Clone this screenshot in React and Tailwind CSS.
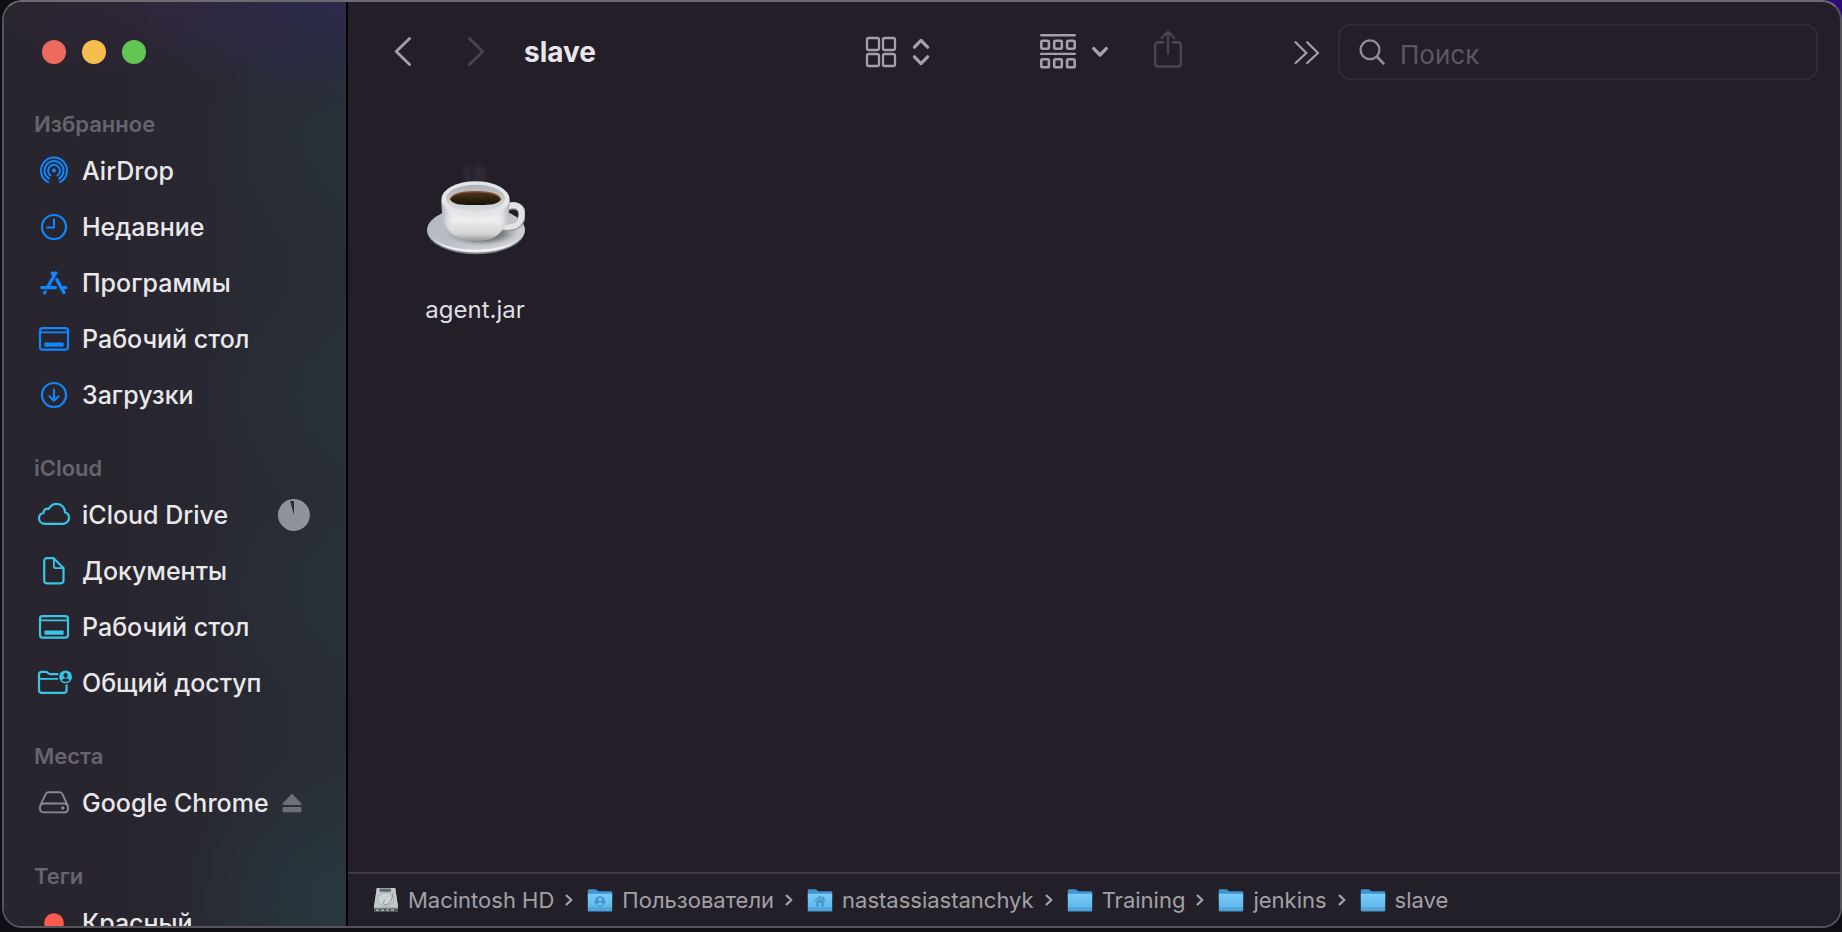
import React from "react";

const line = { fill: "none", stroke: "currentColor", strokeLinecap: "round", strokeLinejoin: "round" };

/* Sidebar icons share a 36x30 canvas centred on (18, 15). */
function SideIcon({ children, width = 2.2 }) {
  return (
    <svg viewBox="0 0 36 30" className="h-[30px] w-9 shrink-0" {...line} strokeWidth={width} aria-hidden="true">
      {children}
    </svg>
  );
}

const AirDropIcon = () => (
  <SideIcon width={2}>
    <path d="M12.1 26.1A13 13 0 1 1 23.9 26.1" />
    <path d="M12.9 22.6A9.5 9.5 0 1 1 23.1 22.6" />
    <path d="M14.4 19.4A5.9 5.9 0 1 1 21.6 19.4" />
    <circle cx="18" cy="14.6" r="2" fill="currentColor" stroke="none" />
  </SideIcon>
);

const ClockIcon = () => (
  <SideIcon>
    <circle cx="18" cy="15" r="12" />
    <path d="M18 7.2V15.6H11" strokeWidth="2" />
  </SideIcon>
);

const AppsIcon = () => (
  <SideIcon width={3.3}>
    <path d="M19.8 4.9L11.8 18.8" />
    <path d="M5.8 19.6H19.4" />
    <path d="M16.2 4.9L17.6 7.2" />
    <path d="M20.8 11.6L28 24.6" />
    <path d="M26.4 19.6H29.8" />
    <path d="M9.2 24L8.7 24.8" />
  </SideIcon>
);

const DesktopIcon = () => (
  <SideIcon>
    <rect x="4" y="4.2" width="28" height="21.4" rx="2.6" />
    <path d="M4 8.4H32" strokeWidth="1.6" />
    <rect x="8.4" y="18.6" width="19.2" height="4.2" rx="0.8" fill="currentColor" stroke="none" />
  </SideIcon>
);

const DownloadIcon = () => (
  <SideIcon>
    <circle cx="18" cy="15" r="12" />
    <path d="M18 9.4V20.4M13.4 16.2L18 20.8L22.6 16.2" strokeWidth="2" />
  </SideIcon>
);

const CloudIcon = () => (
  <SideIcon>
    <path d="M9.2 23.8C5.6 23.8 3 21.4 3 18.3C3 15.6 4.8 13.5 7.5 13C7.3 10 10.2 7.9 12.9 8.9C14.3 5.8 17.2 3.8 20.6 3.8C25.4 3.8 28.8 7.3 29 12.2C31.4 12.9 33 15.2 33 17.8C33 21.2 30.3 23.8 27 23.8Z" />
  </SideIcon>
);

const DocumentIcon = () => (
  <SideIcon>
    <path d="M17.6 2.2H10.9C9.3 2.2 8.2 3.3 8.2 4.9V24.6C8.2 26.2 9.3 27.3 10.9 27.3H24.8C26.4 27.3 27.5 26.2 27.5 24.6V12Z" />
    <path d="M17.9 2.4V10.2C17.9 11.4 18.6 12.1 19.8 12.1H27.3" strokeWidth="1.8" />
  </SideIcon>
);

const SharedIcon = () => (
  <SideIcon>
    <path d="M21.5 6.2H14.6C13.8 6.2 13.2 6 12.6 5.5L11.2 4.3C10.7 3.9 10.2 3.8 9.6 3.8H5.6C4 3.8 3 4.8 3 6.4V22C3 23.9 4 24.9 5.9 24.9H28C29.6 24.9 30.6 23.9 30.6 22.3V17.4" />
    <path d="M3 10.8H21.5" strokeWidth="1.8" />
    <circle cx="29.6" cy="8.9" r="6.4" fill="currentColor" stroke="none" />
    <ellipse cx="29.6" cy="7.2" rx="2.1" ry="2.5" fill="#282631" stroke="none" />
    <path d="M25.6 12.6C26.5 10.8 28 10.5 29.6 10.5C31.2 10.5 32.7 10.8 33.6 12.6C31.4 14.4 27.8 14.4 25.6 12.6Z" fill="#282631" stroke="none" />
  </SideIcon>
);

const DriveIcon = () => (
  <SideIcon width={1.9}>
    <path d="M9.6 6.2C10.1 4.8 11 4.3 12.4 4.3H23.6C25 4.3 25.9 4.8 26.4 6.2L31.4 16.8C31.8 17.7 32 18.6 32 19.6V20.4C32 23 30.6 24.4 28 24.4H8C5.4 24.4 4 23 4 20.4V19.6C4 18.6 4.2 17.7 4.6 16.8Z" />
    <path d="M4.6 17.2C5.4 16 6.4 15.5 8 15.5H28C29.6 15.5 30.6 16 31.4 17.2" />
    <circle cx="26.8" cy="20" r="1.7" fill="currentColor" stroke="none" />
  </SideIcon>
);

const TagDot = () => (
  <SideIcon>
    <circle cx="18" cy="15" r="9.8" fill="currentColor" stroke="none" />
  </SideIcon>
);

const SyncPie = () => (
  <svg viewBox="0 0 32 32" className="ml-auto size-8 shrink-0 text-[#90939b]" role="img" aria-label="Синхронизация">
    <path d="M16 16L16 2L16 0A16 16 0 1 1 11.6 0.6Z" fill="currentColor" />
    <path d="M11.4 .7A16 16 0 0 1 16.2 0V2H11.8Z" fill="currentColor" />
  </svg>
);

const Eject = () => (
  <svg viewBox="0 0 20 20" className="mr-2 ml-auto size-5 shrink-0 text-[#6d7079]" fill="currentColor" aria-hidden="true">
    <path d="M9.1 1.4Q10 .6 10.9 1.4L19.2 10.2Q20 11.8 18.6 12H1.4Q0 11.8 .8 10.2Z" />
    <rect x="0.5" y="14" width="19" height="5.2" rx="1" />
  </svg>
);

const sections = [
  {
    title: "Избранное",
    color: "text-[#0f87ff]",
    items: [
      { label: "AirDrop", Icon: AirDropIcon },
      { label: "Недавние", Icon: ClockIcon },
      { label: "Программы", Icon: AppsIcon },
      { label: "Рабочий стол", Icon: DesktopIcon },
      { label: "Загрузки", Icon: DownloadIcon },
    ],
  },
  {
    title: "iCloud",
    color: "text-[#38c6e6]",
    items: [
      { label: "iCloud Drive", Icon: CloudIcon, Extra: SyncPie },
      { label: "Документы", Icon: DocumentIcon },
      { label: "Рабочий стол", Icon: DesktopIcon },
      { label: "Общий доступ", Icon: SharedIcon },
    ],
  },
  {
    title: "Места",
    color: "text-[#8b898f]",
    items: [{ label: "Google Chrome", Icon: DriveIcon, Extra: Eject }],
  },
  {
    title: "Теги",
    color: "text-[#ff5a52]",
    items: [{ label: "Красный", Icon: TagDot }],
  },
];

function Sidebar() {
  return (
    <aside className="flex w-[344px] shrink-0 flex-col overflow-hidden border-r-2 border-black bg-[#28252f] bg-[radial-gradient(220px_110px_at_100%_0,#2b2a4c,transparent),radial-gradient(200px_80px_at_50%_0,#31263a,transparent),radial-gradient(150px_110px_at_100%_140px,#28343a80,transparent),radial-gradient(150px_110px_at_100%_395px,#28353b80,transparent),radial-gradient(150px_110px_at_100%_590px,#28353b80,transparent),radial-gradient(170px_150px_at_100%_900px,#29383f,transparent),linear-gradient(to_right,#28252f_35%,#292e36)]">
      <div className="flex h-[103px] shrink-0 gap-4 pt-[38px] pl-[38px]">
        <button aria-label="Закрыть" className="size-6 rounded-full bg-[#ed6a5f]" />
        <button aria-label="Свернуть" className="size-6 rounded-full bg-[#f5be4f]" />
        <button aria-label="Развернуть" className="size-6 rounded-full bg-[#62c655]" />
      </div>
      <nav className="flex flex-col gap-[26px]">
        {sections.map((s) => (
          <section key={s.title}>
            <h2 className="h-[38px] pl-[30px] text-[22px] leading-[38px] font-semibold text-[#67646e]">{s.title}</h2>
            <ul>
              {s.items.map(({ label, Icon, Extra }) => (
                <li key={label}>
                  <a href="#" className={"flex h-14 items-center pr-9 pl-8 " + s.color}>
                    <Icon />
                    <span className="ml-[10px] text-[25px] leading-8 font-medium whitespace-nowrap text-[#e9e8ea]">{label}</span>
                    {Extra && <Extra />}
                  </a>
                </li>
              ))}
            </ul>
          </section>
        ))}
      </nav>
    </aside>
  );
}

function Toolbar() {
  return (
    <header className="flex h-[100px] shrink-0 items-center pr-[22px] pl-[46px] text-[#a59fab]">
      <button aria-label="Назад" className="shrink-0">
        <svg viewBox="0 0 18 30" className="h-[30px] w-[18px]" {...line} strokeWidth="2.8">
          <path d="M15.6 1.6L2.2 14.4L15.6 27.4" />
        </svg>
      </button>
      <button aria-label="Вперёд" className="ml-[55px] shrink-0 text-[#4a4450]" disabled>
        <svg viewBox="0 0 18 30" className="h-[30px] w-[18px]" {...line} strokeWidth="2.8">
          <path d="M2.4 1.6L15.8 14.4L2.4 27.4" />
        </svg>
      </button>
      <h1 className="ml-[39px] text-[28px] leading-9 font-bold text-[#e8e6e9]">slave</h1>
      <button aria-label="Вид: значки" className="ml-auto flex shrink-0 items-center gap-[15px]">
        <svg viewBox="0 0 32 32" className="size-8" {...line} strokeWidth="2.3">
          <rect x="2" y="2" width="12" height="12" rx="1.8" />
          <rect x="18" y="2" width="12" height="12" rx="1.8" />
          <rect x="2" y="18" width="12" height="12" rx="1.8" />
          <rect x="18" y="18" width="12" height="12" rx="1.8" />
        </svg>
        <svg viewBox="0 0 18 28" className="h-7 w-[18px]" {...line} strokeWidth="3.2">
          <path d="M2.4 9.2L9 2.4L15.6 9.2M2.4 18.8L9 25.6L15.6 18.8" />
        </svg>
      </button>
      <button aria-label="Группировка" className="ml-[110px] flex shrink-0 items-center gap-4">
        <svg viewBox="0 0 36 36" className="size-9" {...line} strokeWidth="2.6">
          <path d="M1.2 1.2H34.8M1.2 19.9H34.8" strokeWidth="2.4" />
          <rect x="1.3" y="6.7" width="7.6" height="8" rx="1.4" />
          <rect x="14.2" y="6.7" width="7.6" height="8" rx="1.4" />
          <rect x="27.1" y="6.7" width="7.6" height="8" rx="1.4" />
          <rect x="1.3" y="25.3" width="7.6" height="8" rx="1.4" />
          <rect x="14.2" y="25.3" width="7.6" height="8" rx="1.4" />
          <rect x="27.1" y="25.3" width="7.6" height="8" rx="1.4" />
        </svg>
        <svg viewBox="0 0 16 12" className="h-3 w-4" {...line} strokeWidth="3.4">
          <path d="M1.8 2.6L8 9L14.2 2.6" />
        </svg>
      </button>
      <button aria-label="Поделиться" className="ml-[45px] shrink-0 text-[#4a4450]" disabled>
        <svg viewBox="0 2 30 40" className="h-10 w-[30px]" overflow="visible" {...line} strokeWidth="2.5">
          <path d="M10 12.2H5.4C3.3 12.2 2.2 13.3 2.2 15.4V33.4C2.2 35.5 3.3 36.6 5.4 36.6H24.6C26.7 36.6 27.8 35.5 27.8 33.4V15.4C27.8 13.3 26.7 12.2 24.6 12.2H20" />
          <path d="M15 23.6V2M8.6 8L15 1.8L21.4 8" strokeWidth="2.2" />
        </svg>
      </button>
      <button aria-label="Ещё" className="ml-[111px] shrink-0">
        <svg viewBox="0 0 26 24" className="h-6 w-[26px]" {...line} strokeWidth="2.2">
          <path d="M1.6 2.2L12.4 13L1.6 23M13.2 2.2L24 13L13.2 23" />
        </svg>
      </button>
      <label className="ml-[18px] flex h-14 w-[480px] shrink-0 items-center rounded-xl border-2 border-[#312b36] pl-[18px]">
        <svg viewBox="0 0 28 28" className="size-7 shrink-0 text-[#918d96]" {...line} strokeWidth="2.3" aria-hidden="true">
          <circle cx="12" cy="11.8" r="9.4" />
          <path d="M19 18.8L25.4 25.4" strokeWidth="2.8" />
        </svg>
        <input
          type="search"
          aria-label="Поиск"
          placeholder="Поиск"
          className="ml-[14px] min-w-0 flex-1 bg-transparent pt-[6px] text-[26px] leading-8 text-[#e8e6e9] outline-none placeholder:text-[#5c5762]"
        />
      </label>
    </header>
  );
}

function CoffeeCup() {
  return (
    <svg viewBox="0 0 100 104" className="h-[104px] w-[100px]" aria-hidden="true">
      <defs>
        <linearGradient id="saucer" x1="0" y1="0" x2="1" y2="1">
          <stop offset="0" stopColor="#aeb7c1" />
          <stop offset=".45" stopColor="#b9bec4" />
          <stop offset="1" stopColor="#d9dadc" />
        </linearGradient>
        <radialGradient id="shade">
          <stop offset="0" stopColor="#45484d" />
          <stop offset=".6" stopColor="#6d7176" stopOpacity=".8" />
          <stop offset="1" stopColor="#a5a9ae" stopOpacity="0" />
        </radialGradient>
        <linearGradient id="body" x1="0" y1="0" x2="0" y2="1">
          <stop offset="0" stopColor="#e2e3e6" />
          <stop offset=".5" stopColor="#ededee" />
          <stop offset=".82" stopColor="#d2d2d3" />
          <stop offset="1" stopColor="#8f9092" />
        </linearGradient>
        <linearGradient id="side" x1="0" y1="0" x2="1" y2="0">
          <stop offset="0" stopColor="#85888d" stopOpacity=".6" />
          <stop offset=".2" stopColor="#fff" stopOpacity="0" />
          <stop offset=".8" stopColor="#fff" stopOpacity="0" />
          <stop offset="1" stopColor="#85888d" stopOpacity=".6" />
        </linearGradient>
        <linearGradient id="inner" x1="0" y1="0" x2="0" y2="1">
          <stop offset="0" stopColor="#aeb1b6" />
          <stop offset="1" stopColor="#dcdddf" />
        </linearGradient>
        <linearGradient id="coffee" x1="0" y1="0" x2="0" y2="1">
          <stop offset="0" stopColor="#56371f" />
          <stop offset=".5" stopColor="#30220f" />
          <stop offset="1" stopColor="#17120a" />
        </linearGradient>
        <filter id="soft" x="-1" y="-1" width="3" height="3">
          <feGaussianBlur stdDeviation="2.4" />
        </filter>
      </defs>
      <g fill="none" stroke="#64626e" strokeWidth="3" opacity=".38" filter="url(#soft)">
        <path d="M44 31C38 24 46 17 41 10M52 31C48 24 55 16 52 8M57 31C62 24 54 17 60 12" />
      </g>
      <g transform="translate(1 0)">
        <ellipse cx="50" cy="74.6" rx="49" ry="23.6" fill="#7d838b" />
        <ellipse cx="50" cy="73.8" rx="48.8" ry="23" fill="url(#saucer)" />
        <path d="M3 78C9 89 27 96 50 96S91 89 97 78C92 87.5 74 93.6 50 93.6S8 87.5 3 78Z" fill="#f1f2f3" />
        <ellipse cx="56" cy="77" rx="37" ry="13.4" fill="url(#shade)" />
        <path d="M80 51.5C91 47 96.5 52 96 59C95.5 68 89 73.5 77 71" fill="none" stroke="#95989c" strokeWidth="7.4" strokeLinecap="round" />
        <path d="M80 51C91 46.5 96.2 51.5 95.7 58.5C95.2 67.5 89 73 77 70.5" fill="none" stroke="#e1e2e4" strokeWidth="5.8" strokeLinecap="round" />
        <path d="M15.5 44C15.5 64 19 72 27.5 79C37 87.6 62 87.6 71.5 79C80 72 83.5 64 83.5 44Z" fill="url(#body)" />
        <path d="M15.5 44C15.5 64 19 72 27.5 79C37 87.6 62 87.6 71.5 79C80 72 83.5 64 83.5 44Z" fill="url(#side)" />
        <ellipse cx="49.5" cy="43.2" rx="34" ry="18" fill="#e4e5e8" />
        <ellipse cx="49.5" cy="42.4" rx="29.5" ry="13.6" fill="url(#inner)" />
        <path d="M24 43.6C26 37.6 37 35.6 49.5 35.6S73 37.6 75 43.6C71 49.6 61 49.1 49.5 49.1S28 49.6 24 43.6Z" fill="url(#coffee)" />
        <path d="M24 43.6C26 37.6 37 35.6 49.5 35.6S73 37.6 75 43.6" fill="none" stroke="#8b5536" strokeWidth="1.2" />
      </g>
    </svg>
  );
}

function DiskIcon() {
  return (
    <svg viewBox="0 0 26 26" className="size-[26px] shrink-0" aria-hidden="true">
      <path d="M3.8 1H22.2L25 20V24Q25 25 24 25H2Q1 25 1 24V20Z" fill="#a9b1b3" />
      <path d="M3.8 1H22.2L25 20H1Z" fill="#c3c9cb" />
      <rect x="6.5" y="1.6" width="11.5" height="3.2" fill="#62686b" />
      <ellipse cx="12.6" cy="12.4" rx="8" ry="6.8" fill="#cdd2d4" stroke="#a2aaad" strokeWidth="1" />
      <path d="M20 6C19 12 18 17 13 17.6C9.6 17.8 8.8 14.4 12 13.4" fill="none" stroke="#899195" strokeWidth="1" />
      <path d="M1 21.4H25V24Q25 25 24 25H2Q1 25 1 24Z" fill="#4e5557" />
      <path d="M3 23.2H23" stroke="#a3aeac" strokeWidth="1.4" strokeDasharray="3 2" />
    </svg>
  );
}

function FolderIcon({ badge }) {
  return (
    <svg viewBox="0 0 26 26" className="size-[26px] shrink-0" aria-hidden="true">
      <defs>
        <linearGradient id="folder" x1="0" y1="0" x2="0" y2="1">
          <stop offset="0" stopColor="#7accf8" />
          <stop offset=".75" stopColor="#62b9ec" />
          <stop offset="1" stopColor="#4596cb" />
        </linearGradient>
      </defs>
      <path d="M.8 3.4Q.8 2.2 2 2.2H8.2Q9 2.2 9.6 2.7L11 3.9Q11.5 4.2 12.2 4.2H24Q25.2 4.2 25.2 5.4V12H.8Z" fill="#3f93cf" />
      <path d="M.8 6.8H25.2V23.2Q25.2 24.4 24 24.4H2Q.8 24.4 .8 23.2Z" fill="url(#folder)" />
      <path d="M1 20.8H25" stroke="#4b9dd3" strokeWidth=".8" />
      {badge === "user" && (
        <g>
          <circle cx="13" cy="14.2" r="5.2" fill="#4397cf" />
          <circle cx="13" cy="12.6" r="1.9" fill="#74c5f3" />
          <path d="M9.8 17Q13 13.8 16.2 17Q13 19.6 9.8 17Z" fill="#74c5f3" />
        </g>
      )}
      {badge === "home" && (
        <g>
          <path d="M7.6 14.2L13 9.4L18.4 14.2M16.6 9.6V12" fill="none" stroke="#4397cf" strokeWidth="1.3" />
          <path d="M9.2 14.8L13 11.4L16.8 14.8V19.4H14.4V15.8H11.6V19.4H9.2Z" fill="#4397cf" />
        </g>
      )}
    </svg>
  );
}

const path = [
  { name: "Macintosh HD", disk: true },
  { name: "Пользователи", badge: "user" },
  { name: "nastassiastanchyk", badge: "home" },
  { name: "Training" },
  { name: "jenkins" },
  { name: "slave" },
];

function PathBar() {
  return (
    <footer className="shrink-0 border-t-2 border-[#3d3943] bg-[#221f28]">
      <ol className="flex h-[52px] items-center pl-[25px] text-[22px] leading-7 text-[#a3a1a6]">
        {path.map((p, i) => (
          <li key={p.name} className="flex items-center">
            <a href="#" className="flex items-center gap-[9px]">
              {p.disk ? <DiskIcon /> : <FolderIcon badge={p.badge} />}
              <span className="whitespace-nowrap">{p.name}</span>
            </a>
            {i < path.length - 1 && (
              <svg viewBox="0 0 8 12" className="mr-[14px] ml-[11px] h-3 w-2 shrink-0" {...line} strokeWidth="2.2" aria-hidden="true">
                <path d="M1.6 1.6L6.4 6L1.6 10.4" />
              </svg>
            )}
          </li>
        ))}
      </ol>
    </footer>
  );
}

export default function App() {
  return (
    <div className="h-screen overflow-hidden bg-[#100e14] bg-[radial-gradient(40px_40px_at_100%_0,#2c0d78_60%,transparent)] pb-1 pl-[2px] font-['Inter','Liberation_Sans',sans-serif]">
      <div className="flex h-full overflow-hidden rounded-[20px] border-2 border-[#56535a] border-t-[#6d6a71] bg-[#241e29]">
        <Sidebar />
        <main className="flex min-w-0 flex-1 flex-col">
          <Toolbar />
          <div className="flex-1 px-[37px] pt-[54px]">
            <a href="#" className="flex w-[180px] flex-col items-center">
              <CoffeeCup />
              <span className="mt-[34px] text-[24px] leading-8 text-[#dfdde0]">agent.jar</span>
            </a>
          </div>
          <PathBar />
        </main>
      </div>
    </div>
  );
}
